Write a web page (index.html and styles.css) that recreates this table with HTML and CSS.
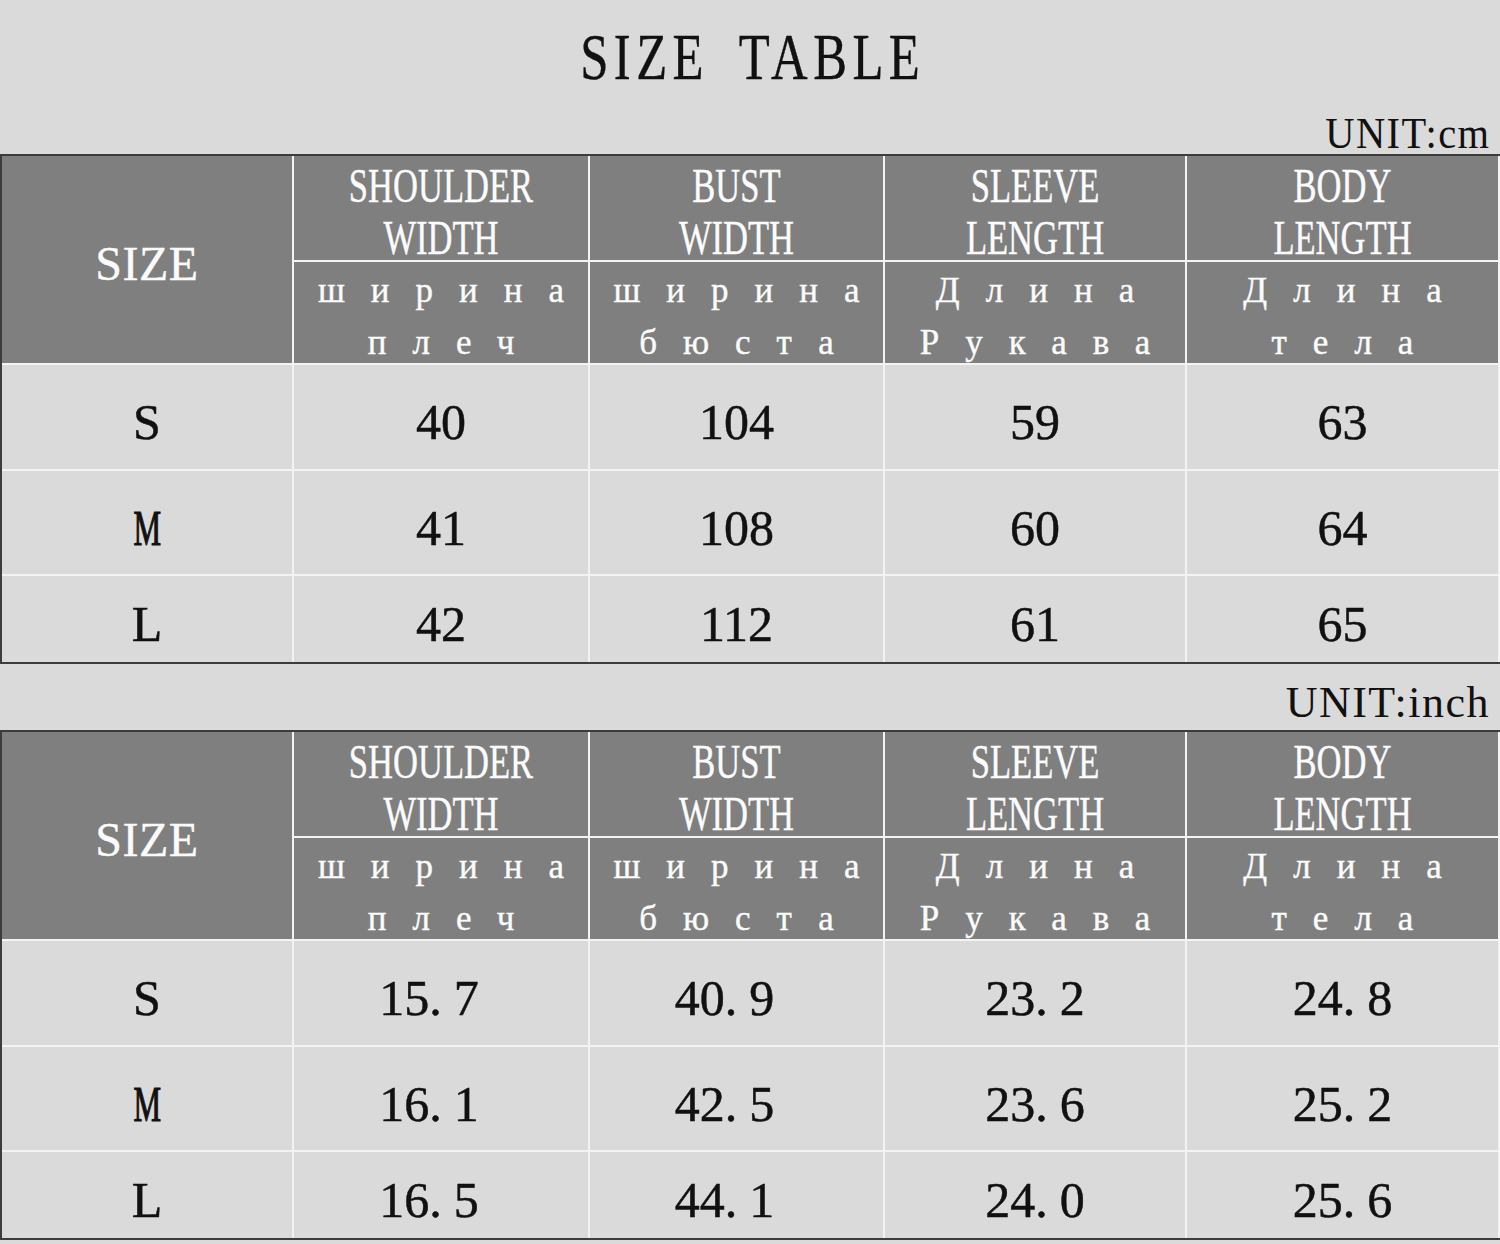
FILE: index.html
```html
<!DOCTYPE html>
<html lang="en">
<head>
<meta charset="utf-8">
<title>Size Table</title>
<link rel="stylesheet" href="styles.css">
</head>
<body>
<div class="page">
  <header class="top">
    <h1 class="title">SIZE TABLE</h1>
    <div class="unit-row"><span class="unit cm">UNIT:cm</span></div>
  </header>

  <div class="table">
    <div class="hd size">SIZE</div>
    <div class="hd en"><span>SHOULDER</span><span>WIDTH</span></div>
    <div class="hd en"><span>BUST</span><span>WIDTH</span></div>
    <div class="hd en"><span>SLEEVE</span><span>LENGTH</span></div>
    <div class="hd en"><span>BODY</span><span>LENGTH</span></div>
    <div class="hd ru"><span>ширина</span><span>плеч</span></div>
    <div class="hd ru"><span>ширина</span><span>бюста</span></div>
    <div class="hd ru"><span>Длина</span><span>Рукава</span></div>
    <div class="hd ru"><span>Длина</span><span>тела</span></div>

    <div class="td">S</div><div class="td">40</div><div class="td">104</div><div class="td">59</div><div class="td">63</div>
    <div class="td"><span class="narrow">M</span></div><div class="td">41</div><div class="td">108</div><div class="td">60</div><div class="td">64</div>
    <div class="td">L</div><div class="td">42</div><div class="td">112</div><div class="td">61</div><div class="td">65</div>
  </div>

  <div class="unit-bar"><span class="unit">UNIT:inch</span></div>

  <div class="table">
    <div class="hd size">SIZE</div>
    <div class="hd en"><span>SHOULDER</span><span>WIDTH</span></div>
    <div class="hd en"><span>BUST</span><span>WIDTH</span></div>
    <div class="hd en"><span>SLEEVE</span><span>LENGTH</span></div>
    <div class="hd en"><span>BODY</span><span>LENGTH</span></div>
    <div class="hd ru"><span>ширина</span><span>плеч</span></div>
    <div class="hd ru"><span>ширина</span><span>бюста</span></div>
    <div class="hd ru"><span>Длина</span><span>Рукава</span></div>
    <div class="hd ru"><span>Длина</span><span>тела</span></div>

    <div class="td">S</div><div class="td shift">15<span class="dot">.</span>7</div><div class="td shift">40<span class="dot">.</span>9</div><div class="td">23<span class="dot">.</span>2</div><div class="td">24<span class="dot">.</span>8</div>
    <div class="td"><span class="narrow">M</span></div><div class="td shift">16<span class="dot">.</span>1</div><div class="td shift">42<span class="dot">.</span>5</div><div class="td">23<span class="dot">.</span>6</div><div class="td">25<span class="dot">.</span>2</div>
    <div class="td">L</div><div class="td shift">16<span class="dot">.</span>5</div><div class="td shift">44<span class="dot">.</span>1</div><div class="td">24<span class="dot">.</span>0</div><div class="td">25<span class="dot">.</span>6</div>
  </div>
</div>
</body>
</html>
```

FILE: styles.css
```css
html, body {
  margin: 0;
  padding: 0;
  background: #dadada;
}

.page {
  width: 1500px;
  height: 1244px;
  background: #dadada;
  font-family: "Liberation Serif", "Times New Roman", serif;
  color: #111;
  overflow: hidden;
}

.top {
  height: 154px;
  display: flex;
  flex-direction: column;
}

.title {
  margin: 0;
  height: 114px;
  display: flex;
  align-items: center;
  justify-content: center;
  font-size: 65px;
  font-weight: normal;
  letter-spacing: 7px;
  word-spacing: 16px;
  padding-left: 7px;
  transform: scaleX(0.78);
  -webkit-text-stroke: 0.4px #111;
}

.unit-row {
  height: 40px;
  display: flex;
  align-items: center;
  justify-content: flex-end;
  padding-right: 10px;
}

.unit {
  display: inline-block;
  font-size: 44px;
  line-height: 40px;
  letter-spacing: 1.5px;
  transform-origin: right center;
}

.unit.cm {
  transform: scaleX(0.92);
}

.unit-bar {
  height: 66px;
  box-sizing: border-box;
  padding: 12px 10px 0 0;
  display: flex;
  align-items: center;
  justify-content: flex-end;
}

.table {
  display: grid;
  grid-template-columns: 290px 294px 293px 300px 311px;
  grid-template-rows: 104px 101px 104px 103px 86px;
  gap: 2px;
  background: #f3f3f3;
  border-top: 2px solid #3c3c3c;
  border-bottom: 2px solid #3c3c3c;
  border-left: 2px solid #3c3c3c;
  padding-right: 2px;
}

.hd {
  background: #7f7f7f;
  color: #fbfbfb;
  display: flex;
  flex-direction: column;
  align-items: center;
  justify-content: center;
  box-sizing: border-box;
  padding-top: 8px;
  min-height: 0;
  -webkit-text-stroke: 0.4px #fbfbfb;
}

.hd.size {
  grid-row: span 2;
  font-size: 48px;
  line-height: 52px;
  letter-spacing: 0.5px;
}

.hd.en span {
  display: block;
  width: 100%;
  text-align: center;
  font-size: 48px;
  line-height: 52px;
  transform: scaleX(0.72);
}

.hd.ru span {
  display: block;
  text-align: center;
  font-size: 35px;
  line-height: 52px;
  letter-spacing: 26px;
  padding-left: 26px;
}

.td {
  background: #dadada;
  display: flex;
  align-items: center;
  justify-content: center;
  box-sizing: border-box;
  padding-top: 10px;
  font-size: 50px;
  line-height: 56px;
  min-height: 0;
  -webkit-text-stroke: 0.5px #111;
}

.td.shift {
  padding-right: 24px;
}

.narrow {
  display: inline-block;
  transform: scaleX(0.62);
  -webkit-text-stroke: 1.2px #111;
}

.dot {
  margin-right: 12px;
}
```
